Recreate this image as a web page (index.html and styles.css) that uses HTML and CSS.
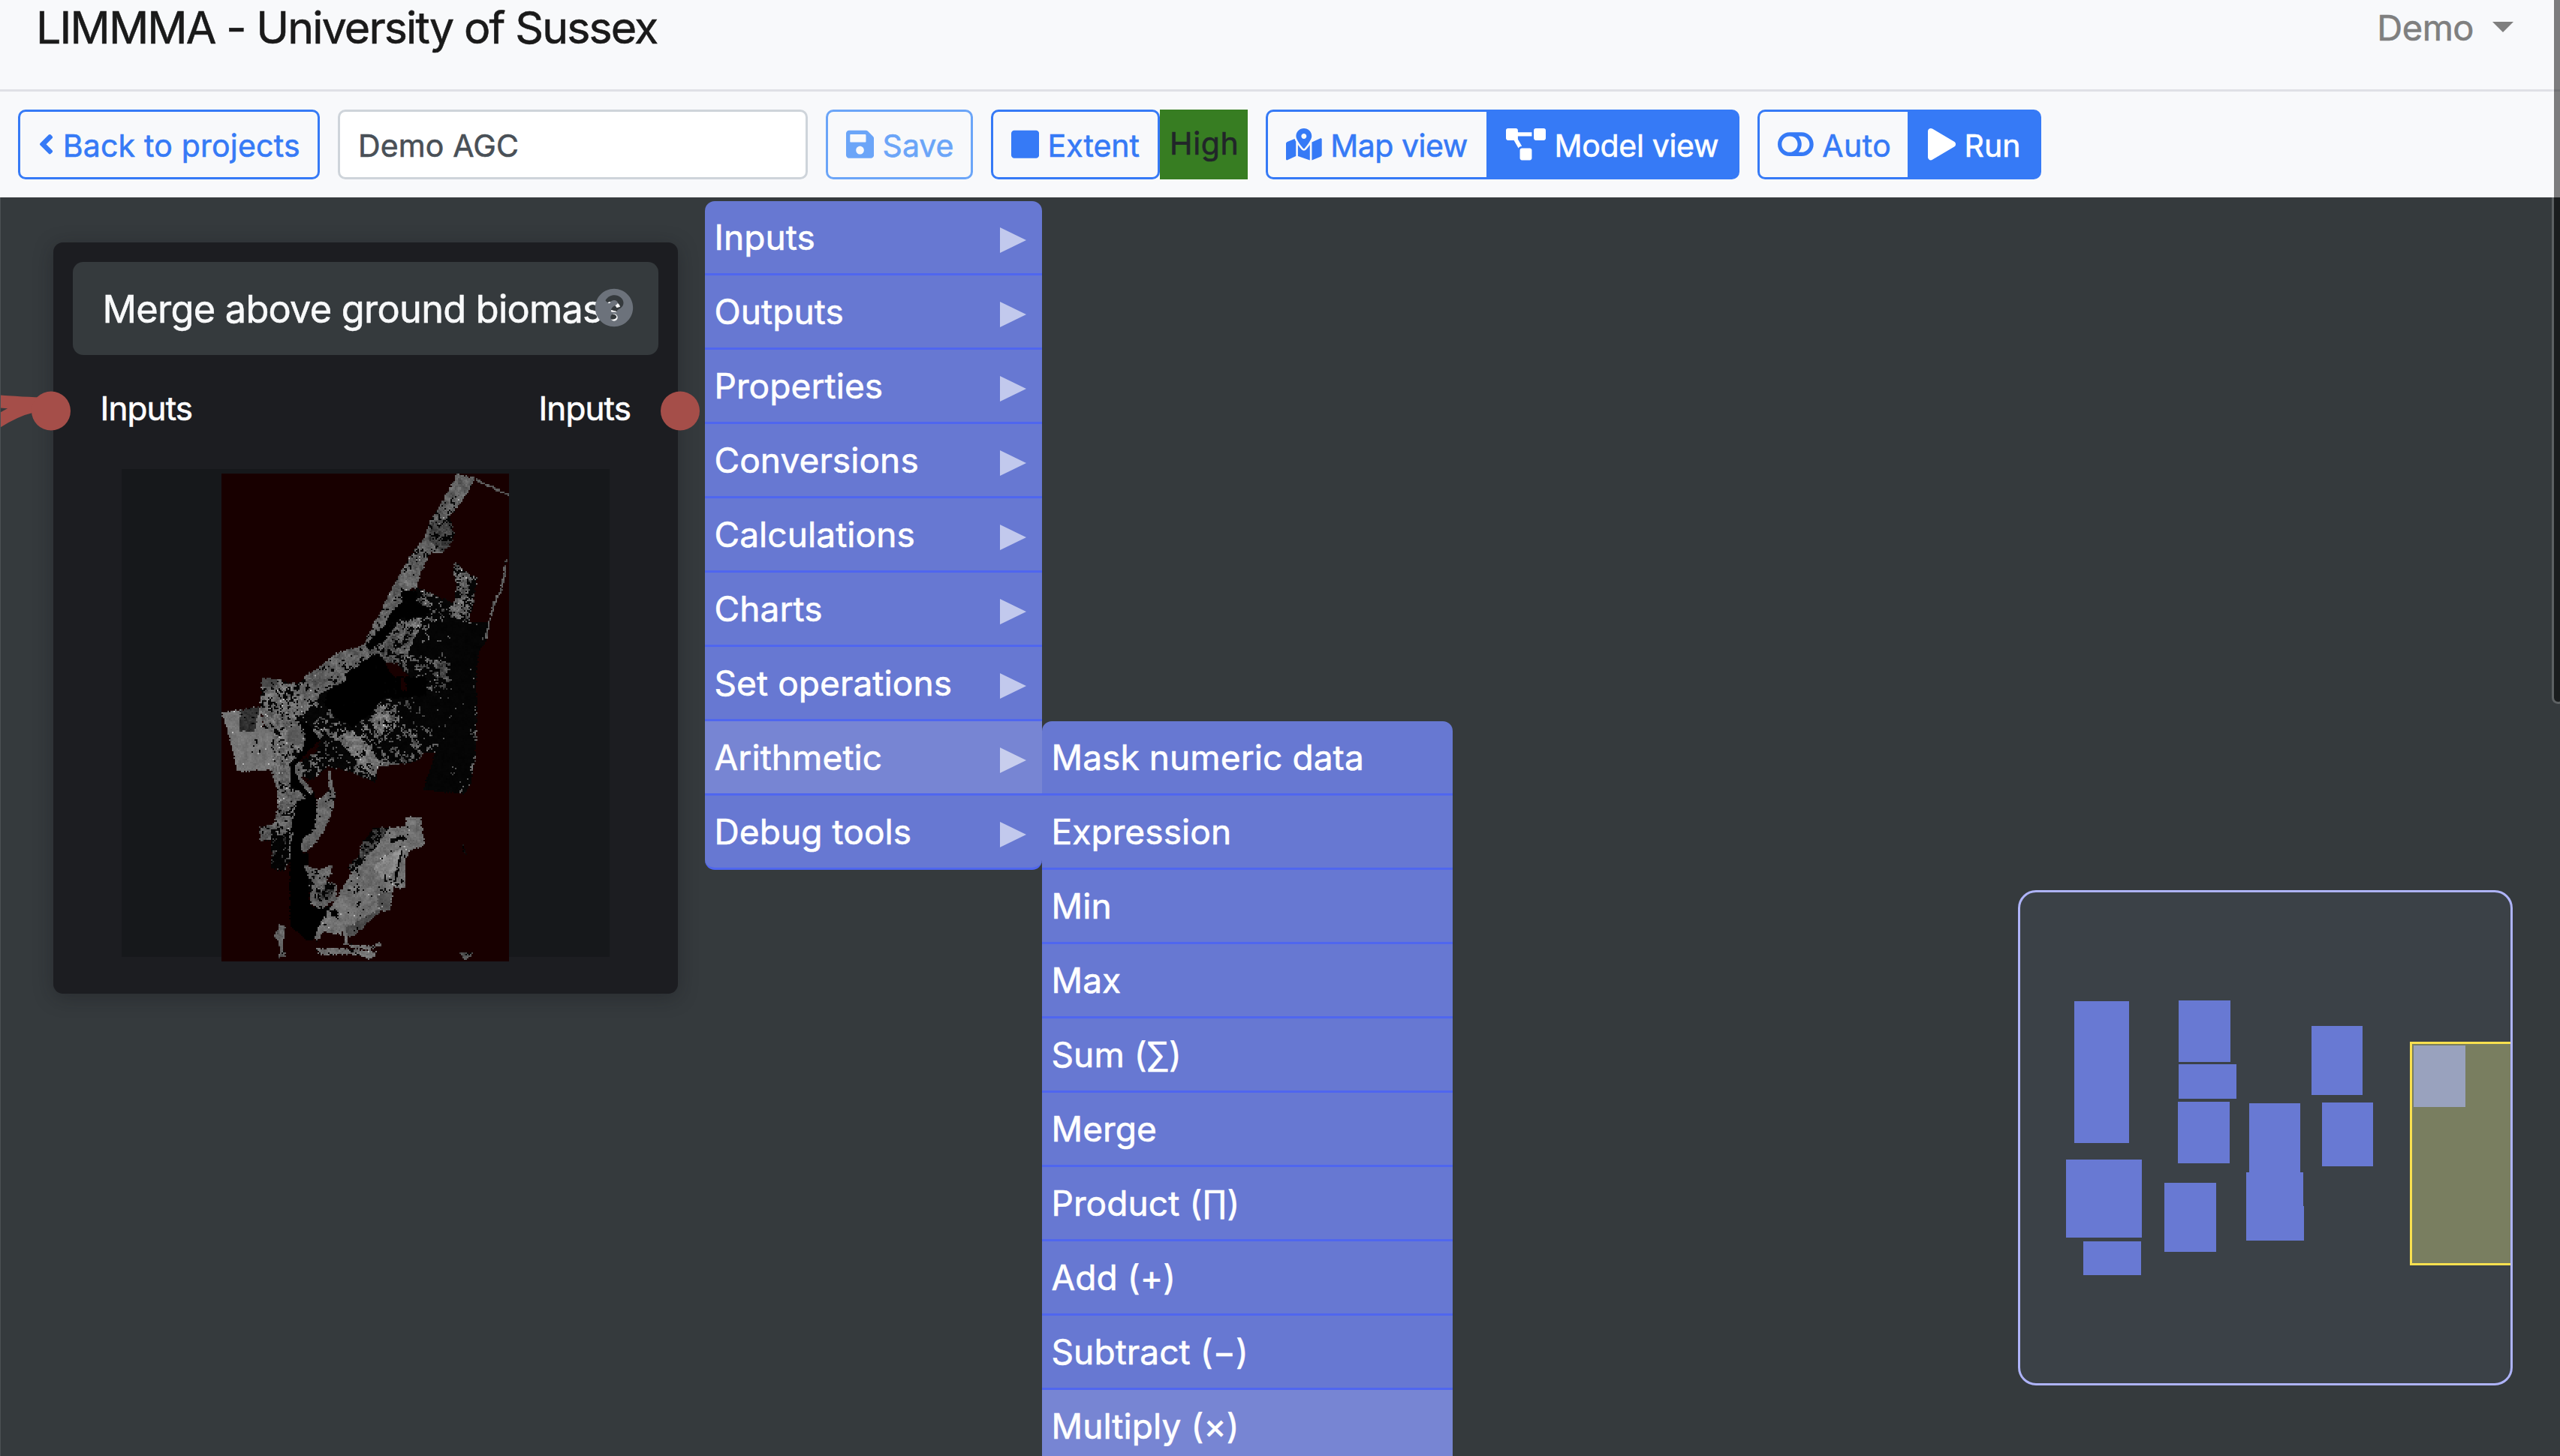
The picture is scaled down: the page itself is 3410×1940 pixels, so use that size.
FILE: index.html
```html
<!DOCTYPE html>
<html lang="en">
<head>
<meta charset="utf-8">
<title>LIMMMA - University of Sussex</title>
<link rel="stylesheet" href="styles.css">
</head>
<body>
<header class="navbar">
  <div class="brand">LIMMMA - University of Sussex</div>
  <div class="user">Demo<span class="caret"></span></div>
</header>

<div class="toolbar">
  <button class="btn back"><svg class="icon" viewBox="0 0 256 512"><path d="M31.7 239l136-136c9.4-9.4 24.6-9.4 33.9 0l22.6 22.6c9.4 9.4 9.4 24.6 0 33.9L127.9 256l96.4 96.4c9.4 9.4 9.4 24.6 0 33.9L201.7 409c-9.4 9.4-24.6 9.4-33.9 0l-136-136c-9.5-9.4-9.5-24.6-.1-34z"/></svg><span>Back to projects</span></button>
  <div class="name"><span>Demo AGC</span></div>
  <button class="btn save"><svg class="icon" viewBox="0 0 448 512"><path d="M433.941 129.941l-83.882-83.882A48 48 0 0 0 316.118 32H48C21.49 32 0 53.49 0 80v352c0 26.51 21.49 48 48 48h352c26.51 0 48-21.49 48-48V163.882a48 48 0 0 0-14.059-33.941zM224 416c-35.346 0-64-28.654-64-64 0-35.346 28.654-64 64-64s64 28.654 64 64c0 35.346-28.654 64-64 64zm96-304.52V212c0 6.627-5.373 12-12 12H76c-6.627 0-12-5.373-12-12V108c0-6.627 5.373-12 12-12h228.52c3.183 0 6.235 1.264 8.485 3.515l3.48 3.48A11.996 11.996 0 0 1 320 111.48z"/></svg><span>Save</span></button>
  <div class="group">
    <button class="btn extent"><svg class="icon" viewBox="0 0 448 512"><path d="M400 32H48C21.5 32 0 53.5 0 80v352c0 26.5 21.5 48 48 48h352c26.5 0 48-21.5 48-48V80c0-26.5-21.5-48-48-48z"/></svg><span>Extent</span></button>
    <div class="quality">High</div>
  </div>
  <div class="group">
    <button class="btn first map"><svg class="icon" viewBox="0 0 576 512"><path d="M288 0c-69.59 0-126 56.41-126 126 0 56.26 82.35 158.8 113.9 196.02 6.39 7.54 17.82 7.54 24.2 0C331.65 284.8 414 182.26 414 126 414 56.41 357.59 0 288 0zm0 168c-23.2 0-42-18.8-42-42s18.8-42 42-42 42 18.8 42 42-18.8 42-42 42zM20.12 215.95A32.006 32.006 0 0 0 0 245.66v250.32c0 11.32 11.43 19.06 21.94 14.86L160 448V214.92c-8.84-15.98-16.07-31.54-21.25-46.42L20.12 215.95zM288 359.67c-14.07 0-27.38-6.18-36.51-16.96-19.66-23.2-40.57-49.62-59.49-76.72v182l192 64V266c-18.92 27.09-39.82 53.52-59.49 76.72-9.13 10.77-22.44 16.95-36.51 16.95zm266.06-198.51L416 224v288l139.88-55.95A31.996 31.996 0 0 0 576 426.34V176.02c0-11.32-11.43-19.06-21.94-14.86z"/></svg><span>Map view</span></button>
    <button class="btn last active model"><svg class="icon" viewBox="0 0 640 512"><path d="M384 320H256c-17.67 0-32 14.33-32 32v128c0 17.67 14.33 32 32 32h128c17.67 0 32-14.33 32-32V352c0-17.67-14.33-32-32-32zM192 32c0-17.67-14.33-32-32-32H32C14.33 0 0 14.33 0 32v128c0 17.67 14.33 32 32 32h95.72l73.16 128.04C211.98 300.98 232.4 288 256 288h.28L192 175.51V128h224V64H192V32zM608 0H480c-17.67 0-32 14.33-32 32v128c0 17.67 14.33 32 32 32h128c17.67 0 32-14.33 32-32V32c0-17.67-14.33-32-32-32z"/></svg><span>Model view</span></button>
  </div>
  <div class="group">
    <button class="btn first auto"><svg class="icon" viewBox="0 0 576 512"><path d="M384 64H192C85.961 64 0 149.961 0 256s85.961 192 192 192h192c106.039 0 192-85.961 192-192S490.039 64 384 64zM64 256c0-70.741 57.249-128 128-128 70.741 0 128 57.249 128 128 0 70.741-57.249 128-128 128-70.741 0-128-57.249-128-128zm320 128h-48.905c65.217-72.858 65.236-183.12 0-256H384c70.741 0 128 57.249 128 128 0 70.74-57.249 128-128 128z"/></svg><span>Auto</span></button>
    <button class="btn last active run"><svg class="icon" viewBox="0 0 448 512"><path d="M424.4 214.7L72.4 6.6C43.8-10.3 0 6.1 0 47.9V464c0 37.5 40.7 60.1 72.4 41.3l352-208c31.4-18.5 31.5-64.1 0-82.6z"/></svg><span>Run</span></button>
  </div>
</div>

<main class="canvas">
  <section class="node">
    <div class="node-title">
      <span>Merge above ground biomass</span>
      <svg class="help" viewBox="0 0 512 512"><path d="M504 256c0 136.997-111.043 248-248 248S8 392.997 8 256C8 119.083 119.043 8 256 8s248 111.083 248 248zM262.655 90c-54.497 0-89.255 22.957-116.549 63.758-3.536 5.286-2.353 12.415 2.715 16.258l34.699 26.31c5.205 3.947 12.621 3.008 16.665-2.122 17.864-22.658 30.113-35.797 57.303-35.797 20.429 0 45.698 13.148 45.698 32.958 0 14.976-12.363 22.667-32.534 33.976C247.128 238.528 216 254.941 216 296v4c0 6.627 5.373 12 12 12h56c6.627 0 12-5.373 12-12v-1.333c0-28.462 83.186-29.647 83.186-106.667 0-58.002-60.165-102-116.531-102zM256 338c-25.365 0-46 20.635-46 46 0 25.364 20.635 46 46 46s46-20.636 46-46c0-25.364-20.635-46-46-46z"/></svg>
    </div>
    <div class="ports"><span>Inputs</span><span>Inputs</span></div>
    <div class="preview"><canvas id="raster" width="192" height="325"></canvas></div>
  </section>
  <svg class="links" viewBox="0 0 960 400">
    <path d="M-20 270.500C10 272.500 35 275 68 275M-20 311C5 291 32 277 68 274"/>
    <circle cx="68" cy="284.500" r="26"/><circle cx="906" cy="284.500" r="26"/>
  </svg>

  <ul class="menu">
    <li class="more">Inputs</li>
    <li class="more">Outputs</li>
    <li class="more">Properties</li>
    <li class="more">Conversions</li>
    <li class="more">Calculations</li>
    <li class="more">Charts</li>
    <li class="more">Set operations</li>
    <li class="more hover">Arithmetic
      <ul class="menu submenu">
        <li>Mask numeric data</li>
        <li>Expression</li>
        <li>Min</li>
        <li>Max</li>
        <li>Sum (∑)</li>
        <li>Merge</li>
        <li>Product (∏)</li>
        <li>Add (+)</li>
        <li>Subtract (−)</li>
        <li class="hover">Multiply (×)</li>
      </ul>
    </li>
    <li class="more">Debug tools</li>
  </ul>

  <svg class="minimap" viewBox="2691 1189 653 654">
    <g class="mini-node">
      <rect x="2763" y="1334" width="73" height="189"/>
      <rect x="2902" y="1333" width="69" height="82"/>
      <rect x="2902" y="1418" width="77" height="46"/>
      <rect x="2901" y="1468" width="69" height="82"/>
      <rect x="2996" y="1470" width="68" height="93"/>
      <rect x="2992" y="1562" width="76" height="46"/>
      <rect x="2992" y="1607" width="77" height="46"/>
      <rect x="3079" y="1367" width="68" height="92"/>
      <rect x="3093" y="1469" width="68" height="85"/>
      <rect x="2752" y="1545" width="101" height="104"/>
      <rect x="2775" y="1654" width="77" height="45"/>
      <rect x="2883" y="1576" width="69" height="92"/>
    </g>
    <rect class="mini-view" x="3211.500" y="1389.500" width="200" height="295"/>
    <rect class="mini-current" x="3215" y="1393" width="69" height="82"/>
  </svg>
</main>
<div class="scrollbar"></div>
<script src="raster.js"></script>
</body>
</html>
```
FILE: styles.css
```css
* { box-sizing: border-box; }
html, body { margin: 0; height: 1940px; overflow: hidden; }
body {
  position: relative;
  display: flex;
  flex-direction: column;
  background: #f8f9fb;
  font-family: Inter, "Noto Sans", sans-serif;
  -webkit-text-stroke: .6px currentColor;
}

.navbar {
  flex: none;
  height: 122px;
  padding: 7px 62px 0 48px;
  border-bottom: 3px solid #dfe0e6;
  display: flex;
  justify-content: space-between;
  align-items: flex-start;
}
.brand { font-size: 59px; line-height: 60px; letter-spacing: -.0317em; color: #1a1a1a; }
.user {
  display: flex;
  align-items: center;
  gap: 25px;
  font-size: 47px;
  line-height: 60px;
  letter-spacing: -.0106em;
  color: #7f7f7f;
}
.caret { border: 14px solid transparent; border-top-color: currentColor; border-bottom: 0; margin-top: -3px; }

.toolbar {
  flex: none;
  height: 141px;
  padding: 24px 24px 0;
  display: flex;
  align-items: flex-start;
  gap: 24px;
  font-size: 41px;
}
.group { display: flex; }
.btn {
  height: 93px;
  padding: 0 0 0 24px;
  border: 3px solid #367af6;
  border-radius: 10px;
  display: flex;
  align-items: center;
  gap: 11.5px;
  background: transparent;
  color: #367af6;
  font: inherit;
  -webkit-text-stroke: inherit;
  white-space: nowrap;
}
.btn span, .name span { padding-top: 2px; }
.icon { flex: none; height: 42.4px; fill: currentColor; }
.icon path { stroke: none; }
.first { border-radius: 10px 0 0 10px; border-right: 0; }
.last { border-radius: 0 10px 10px 0; }
.active { background: #367af6; color: #fff; }
.back { width: 402px; letter-spacing: .005em; }
.name {
  width: 626px;
  height: 93px;
  padding-left: 24px;
  border: 3px solid #ced4da;
  border-radius: 10px;
  display: flex;
  align-items: center;
  background: #fff;
  color: #495057;
  letter-spacing: .0035em;
}
.save { width: 196px; border-color: #6ba5f8; color: #6ba5f8; }
.extent { width: 225px; }
.quality {
  width: 117px;
  height: 93px;
  padding-left: 13px;
  line-height: 90px;
  background: #377d22;
  color: #212529;
  letter-spacing: .0167em;
}
.map { width: 294px; letter-spacing: -.0115em; }
.model { width: 337px; letter-spacing: -.0075em; padding-left: 23px; }
.auto { width: 200px; letter-spacing: .0118em; }
.run { width: 178px; }

.canvas {
  position: relative;
  flex: 1;
  overflow: hidden;
  background: #353a3d;
  border-left: 1px solid #4b5053;
}
.node {
  position: absolute;
  left: 70px;
  top: 60px;
  width: 832px;
  height: 1001px;
  padding: 26px;
  border-radius: 13px;
  background: #1c1d21;
  box-shadow: 0 5px 26px rgba(20, 20, 25, .35);
}
.node-title {
  position: relative;
  height: 124px;
  padding-left: 39.5px;
  border-radius: 14px;
  display: flex;
  align-items: center;
  background: #353a3d;
  color: #f8f9fa;
  font-size: 50.5px;
  letter-spacing: -.0150em;
  white-space: nowrap;
}
.help { position: absolute; left: 695px; top: 35px; width: 52px; fill: #6c727b; }
.ports {
  margin: 41px 37px 51px 36.5px;
  display: flex;
  justify-content: space-between;
  font-size: 44px;
  line-height: 60px;
  letter-spacing: -.0205em;
  color: #fff;
}
.preview {
  width: 650px;
  height: 650px;
  margin-left: 65px;
  padding-top: 6px;
  display: flex;
  justify-content: center;
  align-items: flex-start;
  background: #16181b;
}
.preview canvas { flex: none; width: 383px; height: 650px; margin-right: 2px; image-rendering: pixelated; }
.links { position: absolute; left: -1px; top: 0; width: 960px; height: 400px; }
.links path { fill: none; stroke: #a54e49; stroke-width: 17px; }
.links circle { fill: #a54e49; }

.menu {
  position: absolute;
  left: 938px;
  top: 5px;
  width: 449px;
  margin: 0;
  padding: 0;
  list-style: none;
  border-radius: 13px;
  color: #fff;
  font-size: 46px;
  letter-spacing: .002em;
}
.menu li {
  position: relative;
  height: 99px;
  padding: 1px 0 0 12.5px;
  border-bottom: 3px solid #4f66ef;
  line-height: 95px;
  background: #6778d2;
  white-space: nowrap;
}
.menu > li:first-child { border-radius: 13px 13px 0 0; }
.menu > li:last-child { border-radius: 0 0 13px 13px; }
.menu li.hover { background: #7785d3; }
.more::after {
  content: "";
  position: absolute;
  right: 21px;
  top: 35px;
  border: 17.5px solid transparent;
  border-left: 35px solid rgba(255, 255, 255, .6);
  border-right: 0;
}
.submenu { left: 100%; top: 0; width: 547px; }
.menu .submenu li:last-child { border-radius: 0; }

.minimap {
  position: absolute;
  left: 2687px;
  top: 923px;
  width: 659px;
  height: 660px;
  border: 3px solid #aeb3f8;
  border-radius: 24px;
  background: #3b4147;
}
.mini-node { fill: #6879d3; }
.mini-view { fill: #797e60; stroke: #f9e04f; stroke-width: 3px; }
.mini-current { fill: #99a2be; }

.scrollbar {
  position: absolute;
  right: -6px;
  top: -20px;
  width: 17px;
  height: 958px;
  border: 3px solid rgba(255, 255, 255, .2);
  border-radius: 9px;
  background: rgba(0, 0, 0, .5);
  background-clip: padding-box;
}
```
FILE: raster.js
```
// Draws the biomass raster preview: each land parcel is a polygon with a mean
// grey level, a spread and a share of empty (black) cells.
const parcels = [
  // river and water
  [0, 0, 1, "575,760 610,775 640,820 600,855 568,885 575,930 620,960 632,1010 628,1070 590,1110 585,1130 605,1140 608,1270 620,1290 690,1285 650,1330 625,1380 605,1386 552,1345 550,1240 548,1100 575,990 600,980 552,945 548,890 590,840 595,800"],
  // eastern block
  [90, 45, .62, "932,388 1040,430 1088,480 1060,560 1040,700 1030,780 985,855 960,850 920,882 815,895 806,937 730,908 665,893 610,935 585,920 580,880 630,850 640,820 610,775 575,760 590,700 700,640 780,570 840,500 880,430"],
  [110, 38, .25, "690,810 740,790 800,850 820,880 806,925 750,880"],
  [110, 50, .42, "800,730 840,720 870,790 800,800"],
  [75, 35, .84, "850,690 960,690 1040,700 1030,800 960,840 900,780"],
  [75, 30, .95, "1060,485 1145,487 1140,530 1115,575 1107,650 1111,730 1105,870 1090,940 1075,970 948,960 985,855 1030,780 1035,690 1030,600 900,570 920,545 970,540 965,485"],
  [90, 40, .5, "1103,700 1111,730 1105,870 1090,940 1075,970 1040,965 1080,945 1100,860"],
  [80, 40, .62, "975,610 1030,600 1035,690 1000,700 965,660"],
  [95, 40, .35, "1045,313 1085,350 1110,360 1100,430 1088,480 1035,470 1050,375 1037,340"],
  // northern strip
  [98, 30, .2, "1050,66 1105,80 1080,125 1045,170 1028,185 1042,235 1030,270 1000,292 975,288 945,340 932,388 895,395 880,450 835,500 800,545 820,572 770,595 720,630 715,655 670,670 640,690 590,750 568,740 575,660 600,635 650,605 690,572 770,550 820,460 860,380 910,300 955,245 970,200 1010,140"],
  [62, 30, .35, "975,200 1028,190 1042,235 1030,270 1000,290 965,250"],
  [92, 45, .35, "810,545 870,480 960,480 940,500 890,600 830,605"],
  [5, 5, .9, "885,395 935,400 925,430 970,445 960,470 880,475 830,540 790,565 775,552 830,500 850,465 885,430"],
  [3, 3, .9, "820,572 850,620 905,640 960,640 960,690 900,700 830,700 790,750 735,782 690,755 652,715 670,670 715,655 720,630 770,595"],
  [-1, 0, 0, "838,600 870,600 905,638 860,638"],
  [-1, 0, 0, "882,643 893,643 903,680 885,680"],
  // western fields
  [105, 38, .32, "462,723 468,642 512,645 545,655 575,660 590,700 575,760 597,800 590,840 560,885 495,903 480,800"],
  [70, 8, 0, "468,642 512,645 512,668 467,668"],
  [116, 14, .04, "347,742 462,723 470,780 500,800 495,903 395,907 370,805"],
  [45, 18, .1, "405,732 460,725 445,793 400,793"],
  [88, 14, .05, "540,785 575,775 597,810 575,835 545,820"],
  [98, 35, .3, "495,903 550,885 553,945 600,980 572,995 558,1075 550,1160 535,1188 495,1180 495,1100 460,1105 462,1065 502,1053 515,1010 512,960"],
  [55, 40, .65, "495,1090 550,1080 548,1150 535,1188 495,1180"],
  [0, 0, 1, "572,990 620,985 620,1070 550,1080"],
  // river banks
  [102, 20, .12, "665,908 673,908 680,955 687,965 680,1015 650,1080 620,1115 600,1135 582,1130 585,1100 625,1070 632,990 668,958"],
  [98, 25, .18, "575,875 590,880 585,925 620,960 615,975 575,930 565,900"],
  [95, 25, .22, "592,1170 640,1185 675,1170 675,1190 660,1215 690,1225 690,1270 640,1295 612,1280 605,1200"],
  [70, 50, .5, "630,1230 685,1225 680,1260 635,1275"],
  // southern fields
  [110, 20, .14, "897,1035 942,1035 954,1115 910,1130 895,1160 897,1237 862,1235 850,1302 825,1300 740,1372 720,1375 720,1398 712,1398 710,1350 700,1368 650,1360 632,1388 622,1375 650,1320 690,1265 735,1190 722,1175 760,1140 760,1115 800,1068 897,1062"],
  [60, 35, .45, "800,1068 850,1065 800,1130 735,1190 722,1175 760,1140 760,1115"],
  [138, 22, 0, "830,1150 890,1120 870,1180 835,1215 800,1180"],
  [10, 10, .5, "850,1100 890,1088 905,1100 880,1100 855,1112"],
  [10, 10, .5, "882,1130 888,1130 870,1220 862,1218"],
  [85, 12, 0, "812,1255 858,1245 850,1302 815,1295"],
  [75, 14, .08, "815,1298 825,1300 740,1372 720,1375 718,1345"],
  [0, 0, .9, "670,1300 690,1295 695,1315 675,1318"],
  // slivers
  [110, 25, .15, "627,1408 710,1405 810,1415 808,1428 790,1440 760,1425 640,1425"],
  [110, 25, .15, "722,1393 800,1400 825,1388 834,1393 790,1411 735,1405"],
  [95, 30, .2, "520,1335 537,1350 530,1390 538,1430 520,1430 517,1385 504,1375"],
  [75, 30, .3, "1053,1418 1097,1418 1080,1440"],
  [15, 15, .3, "1068,1112 1082,1142 1072,1142"],
  [90, 15, 0, "1100,78 1205,124 1205,130 1100,84"],
  [90, 30, .1, "1195,305 1199,305 1192,370 1183,400 1165,430 1150,480 1140,530 1130,530 1142,500 1157,430 1180,390"]
].map(([mean, spread, empty, pts]) => ({
  mean, spread, empty, pts: pts.split(" ").map(p => p.split(",").map(Number))
}));

const inside = (pts, x, y) => {
  let hit = false;
  for (let i = 0, j = pts.length - 1; i < pts.length; j = i++) {
    const [xi, yi] = pts[i], [xj, yj] = pts[j];
    if (yi > y !== yj > y && x < (xj - xi) * (y - yi) / (yj - yi) + xi) hit = !hit;
  }
  return hit;
};

const hash = (x, y, seed) => {
  let h = Math.imul(x, 374761393) + Math.imul(y, 668265263) + Math.imul(seed, 1274126177);
  h = Math.imul(h ^ (h >>> 13), 1274126177);
  return ((h ^ (h >>> 16)) >>> 0) / 4294967296;
};
const patch = (x, y, size, seed) => {
  const gx = Math.floor(x / size), gy = Math.floor(y / size);
  const fx = x / size - gx, fy = y / size - gy;
  const top = hash(gx, gy, seed) * (1 - fx) + hash(gx + 1, gy, seed) * fx;
  const low = hash(gx, gy + 1, seed) * (1 - fx) + hash(gx + 1, gy + 1, seed) * fx;
  return top * (1 - fy) + low * fy;
};

const raster = document.getElementById("raster");
const ctx = raster.getContext("2d");
const img = ctx.createImageData(raster.width, raster.height);
for (let y = 0; y < raster.height; y++) {
  for (let x = 0; x < raster.width; x++) {
    const jx = (hash(x, y, 7) - .5) * 5, jy = (hash(x, y, 8) - .5) * 5;
    const px = 347 + (x + .5) * 858 / raster.width + jx;
    const py = 66 + (y + .5) * 1377 / raster.height + jy;
    let parcel = null;
    for (const p of parcels) if (inside(p.pts, px, py)) parcel = p;
    let rgb = [24, 0, 0];
    if (parcel && parcel.mean >= 0) {
      const n = patch(x, y, 2.3, 1) * .5 + hash(x, y, 2) * .3 + patch(x, y, 7, 3) * .2;
      const gap = patch(x, y, 2.1, 4) * .5 + hash(x, y, 5) * .25 + patch(x, y, 9, 6) * .25;
      const cut = parcel.empty >= 1 ? 2 : .5 + (parcel.empty - .5) * .62;
      let g = parcel.mean + (n - .5) * parcel.spread * 3;
      if (gap < cut) g *= .06;
      else if (hash(x, y, 9) > .993) g += 70;
      g = Math.max(0, Math.min(235, g));
      rgb = [g, g, g];
    }
    img.data.set([...rgb, 255], (y * raster.width + x) * 4);
  }
}
ctx.putImageData(img, 0, 0);
```
